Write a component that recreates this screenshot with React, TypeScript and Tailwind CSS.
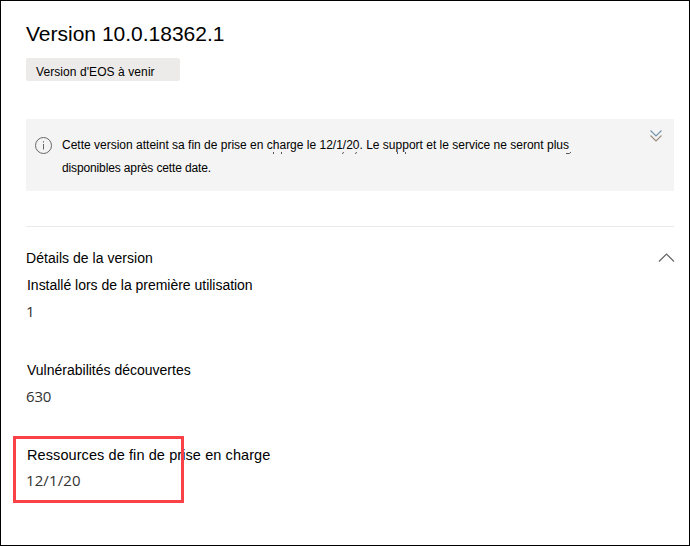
import React from "react";

const sans = "font-['Liberation_Sans',Arial,sans-serif]";
const digits = "font-['Open_Sans','Noto_Sans',sans-serif]";

function Field({ label, value, labelClass, valueClass }: { label: string; value: string; labelClass: string; valueClass: string }) {
  return (
    <div className="flex h-[85px] flex-col items-start">
      <div className={`h-[26px] pl-px leading-[18px] text-black ${labelClass}`}>{label}</div>
      <div className={`leading-[20px] text-[#333] ${digits} ${valueClass}`}>{value}</div>
    </div>
  );
}

export default function App() {
  return (
    <main className={`relative flex h-[546px] w-[690px] flex-col whitespace-nowrap border border-black bg-white pl-[25px] pr-[15px] text-black ${sans}`}>
      <h1 className="mt-5 h-[37px] self-start text-[21px] leading-[26px]">Version 10.0.18362.1</h1>
      <div className="flex h-[23px] w-[154px] items-center rounded-[2px] bg-[#edebe9] pl-[10px] pt-[4px]">
        <span className="text-[12px] leading-4 tracking-[0.08px]">Version d'EOS à venir</span>
      </div>
      <section className="relative mt-[38px] flex h-[72px] bg-[#f4f4f4] pl-2">
        <svg className="mt-[17px]" width="19" height="19" viewBox="0 0 19 19" fill="none" stroke="#666">
          <circle cx="9.5" cy="9.5" r="8" />
          <path d="M9.5 8v5.5M9.5 5.2v1.3" />
        </svg>
        <p className="ml-[9px] mt-[15px] text-[12px] leading-[23px]">
          <span>Cette version atteint sa fin de prise en charge le 12/1/20. Le support et le service ne seront plus</span>
          <br />
          <span className="tracking-[-0.13px]">disponibles après cette date.</span>
        </p>
        <svg className="absolute left-[623px] top-[10px]" width="14" height="14" viewBox="0 0 14 14" fill="none" stroke="#6f93ab" strokeWidth="1.1">
          <path d="M1.5 1.500 7 7l5.500-5.500" />
          <path d="M1.500 6.500 7 12l5.500-5.500" stroke="#9a8a7c" />
        </svg>
        <svg className="absolute left-0 top-[32px]" width="560" height="4" viewBox="0 0 560 4" fill="none" stroke="#555">
          <path d="M247.500 1v2M255.500 1v2M316.500 3l1-2M329.500 3l1-2M371.500 1v2M379.500 1v2M540 2.500h3.500l1.500-1.500" />
        </svg>
      </section>
      <div className="mt-[35px] h-px bg-[#eaeaea]" />
      <div className="mt-[22px] flex h-[27px] items-start justify-between">
        <h2 className="text-[14px] leading-[18px] tracking-[0.04px]">Détails de la version</h2>
        <svg className="-mr-px mt-[3px]" width="17" height="11" viewBox="0 0 17 11" fill="none" stroke="#666" strokeWidth="1.2">
          <path d="M1 9.500 8.500 2 16 9.500" />
        </svg>
      </div>
      <Field label="Installé lors de la première utilisation" value="1" labelClass="text-[14px] tracking-[-0.02px]" valueClass="-mt-px text-[15px]" />
      <Field label="Vulnérabilités découvertes" value="630" labelClass="text-[14px]" valueClass="-mt-px text-[15px] tracking-[-0.2px]" />
      <Field label="Ressources de fin de prise en charge" value="12/1/20" labelClass="text-[14.5px] tracking-[0.09px]" valueClass="-mt-[2px] text-[15px] tracking-[0.1px]" />
      <div className="absolute left-[12px] top-[435px] h-[67px] w-[171px] border-[3px] border-[#fa4147]" />
    </main>
  );
}
